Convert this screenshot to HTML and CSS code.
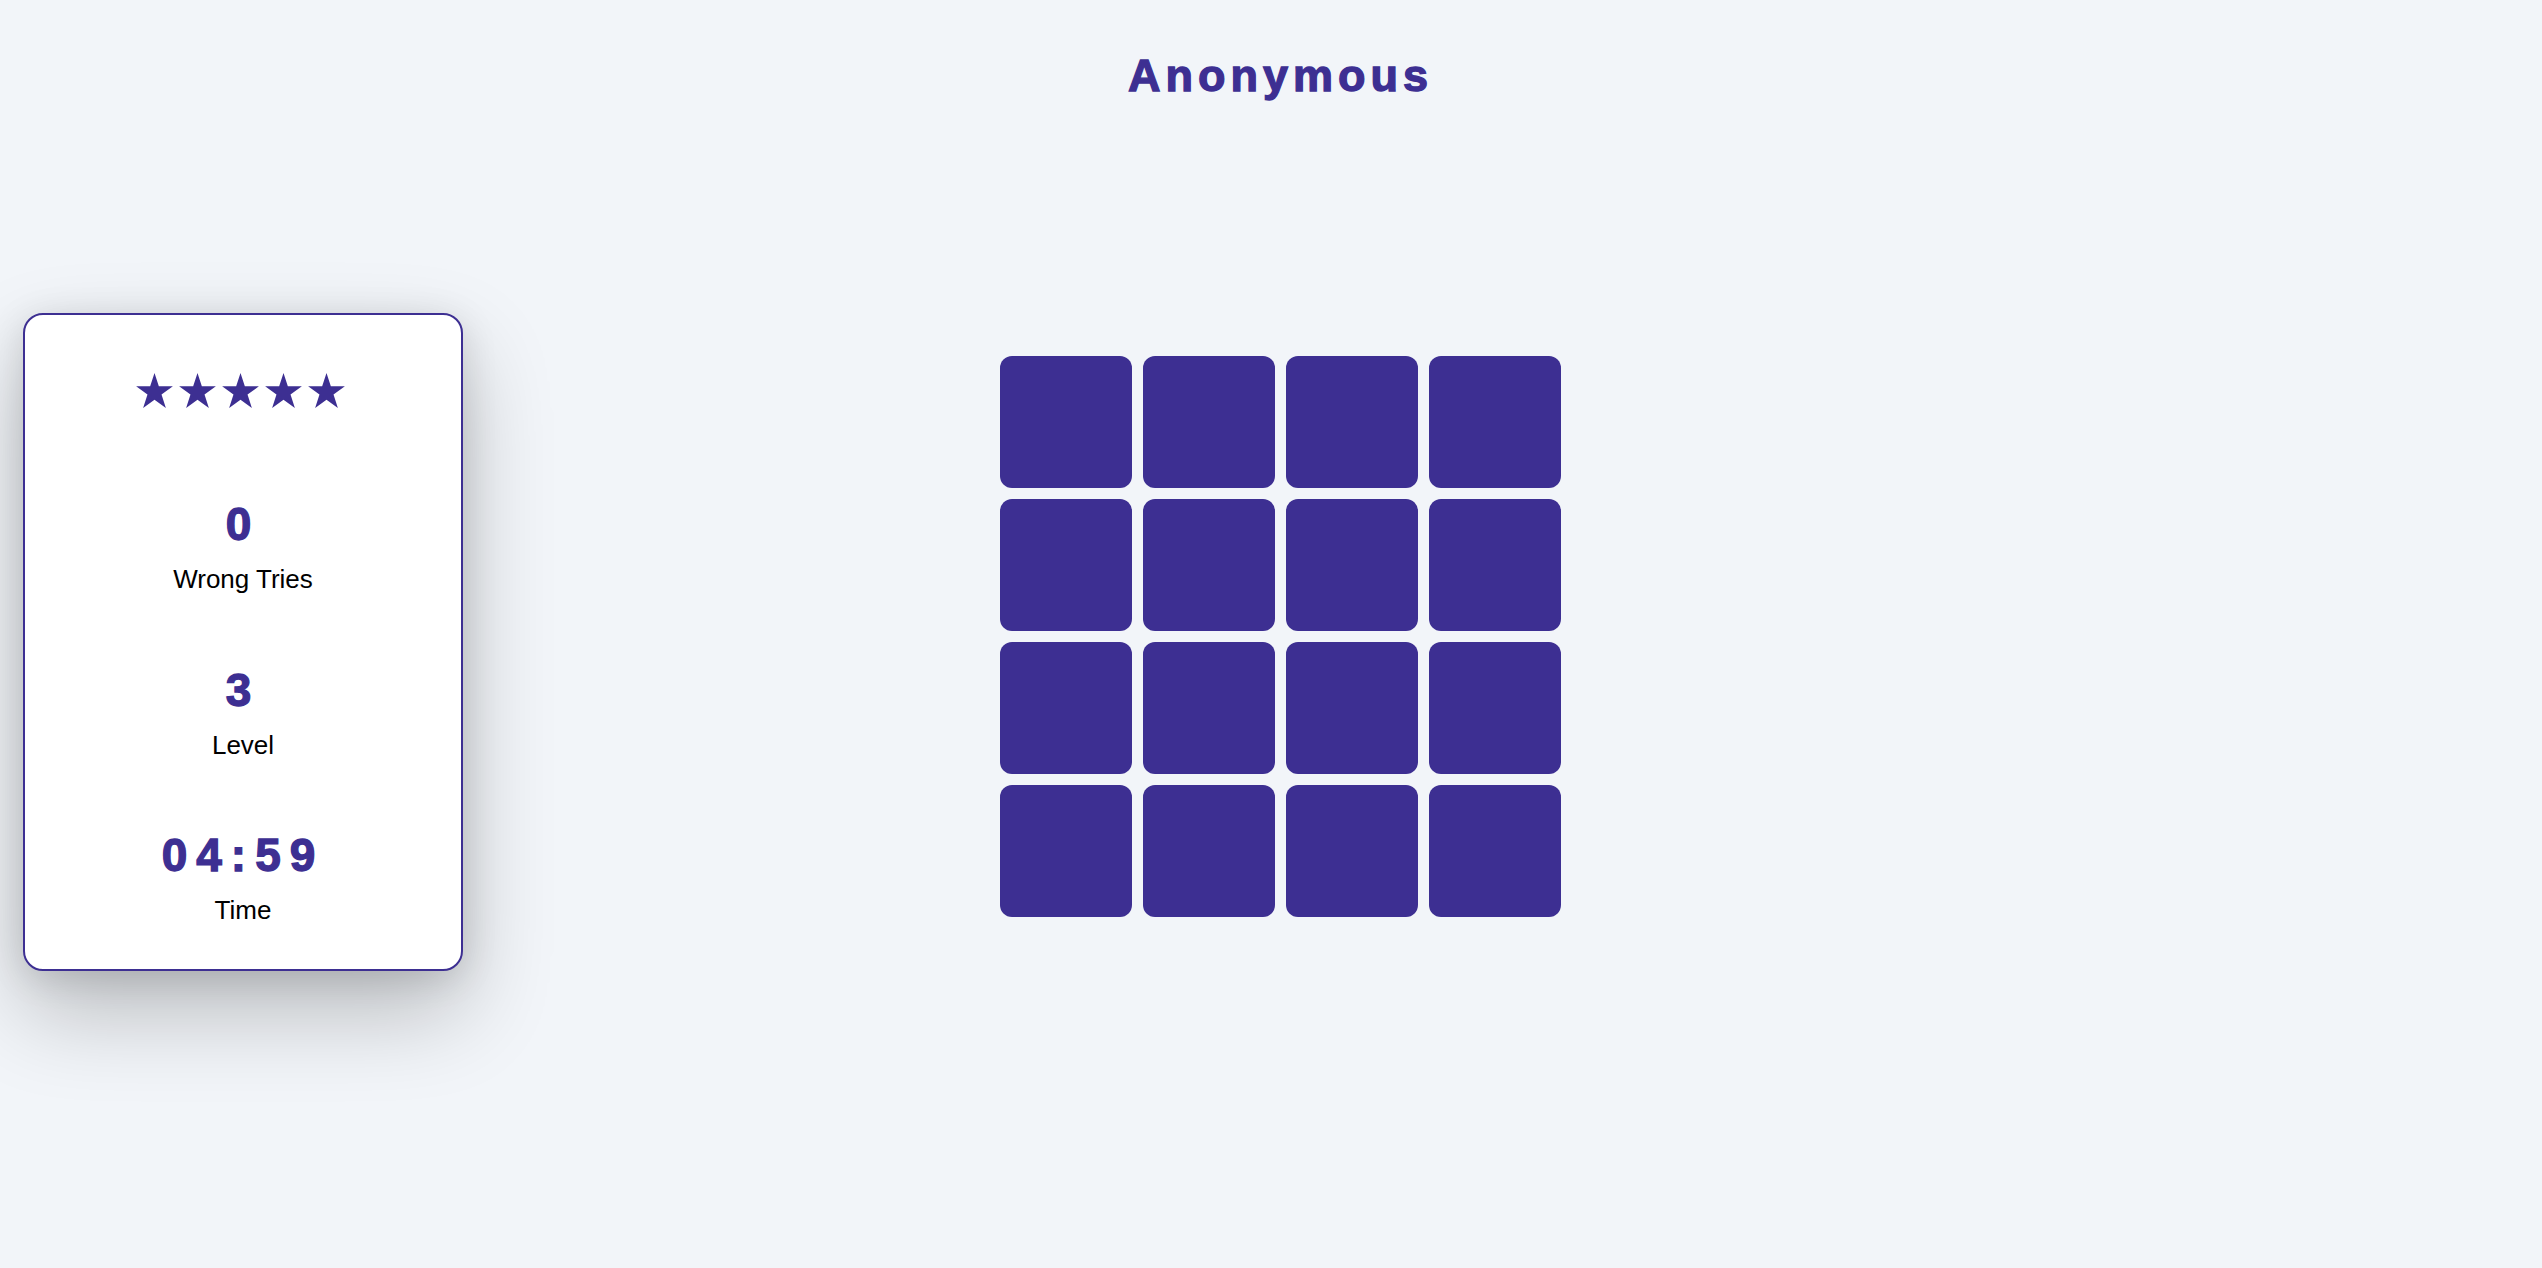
FILE: index.html
```html
<!DOCTYPE html>
<html lang="en">
<head>
<meta charset="utf-8">
<title>Anonymous</title>
<link rel="stylesheet" href="styles.css">
</head>
<body>
<div class="page">
  <h1 class="title">Anonymous</h1>
  <div class="layout">
    <aside class="stats">
      <div class="stars">
        <svg class="star" viewBox="-95.1 -100 190.2 181"><polygon points="0,-100 22.45,-30.9 95.1,-30.9 36.3,11.8 58.8,80.9 0,38.2 -58.8,80.9 -36.3,11.8 -95.1,-30.9 -22.45,-30.9"/></svg>
        <svg class="star" viewBox="-95.1 -100 190.2 181"><polygon points="0,-100 22.45,-30.9 95.1,-30.9 36.3,11.8 58.8,80.9 0,38.2 -58.8,80.9 -36.3,11.8 -95.1,-30.9 -22.45,-30.9"/></svg>
        <svg class="star" viewBox="-95.1 -100 190.2 181"><polygon points="0,-100 22.45,-30.9 95.1,-30.9 36.3,11.8 58.8,80.9 0,38.2 -58.8,80.9 -36.3,11.8 -95.1,-30.9 -22.45,-30.9"/></svg>
        <svg class="star" viewBox="-95.1 -100 190.2 181"><polygon points="0,-100 22.45,-30.9 95.1,-30.9 36.3,11.8 58.8,80.9 0,38.2 -58.8,80.9 -36.3,11.8 -95.1,-30.9 -22.45,-30.9"/></svg>
        <svg class="star" viewBox="-95.1 -100 190.2 181"><polygon points="0,-100 22.45,-30.9 95.1,-30.9 36.3,11.8 58.8,80.9 0,38.2 -58.8,80.9 -36.3,11.8 -95.1,-30.9 -22.45,-30.9"/></svg>
      </div>
      <div class="stat-list">
        <div class="stat">
          <div class="stat-value">0</div>
          <div class="stat-label">Wrong Tries</div>
        </div>
        <div class="stat">
          <div class="stat-value">3</div>
          <div class="stat-label">Level</div>
        </div>
        <div class="stat">
          <div class="stat-value">04:59</div>
          <div class="stat-label">Time</div>
        </div>
      </div>
    </aside>
    <main class="board">
      <div class="tile"></div><div class="tile"></div><div class="tile"></div><div class="tile"></div>
      <div class="tile"></div><div class="tile"></div><div class="tile"></div><div class="tile"></div>
      <div class="tile"></div><div class="tile"></div><div class="tile"></div><div class="tile"></div>
      <div class="tile"></div><div class="tile"></div><div class="tile"></div><div class="tile"></div>
    </main>
    <div class="spacer"></div>
  </div>
</div>
</body>
</html>
```

FILE: styles.css
```css
html, body {
  margin: 0;
  padding: 0;
  background: #f2f5f9;
}

body {
  font-family: "Liberation Sans", Arial, sans-serif;
  color: #000;
  min-height: 1268px;
}

.page {
  padding: 0 4px 0 23px;
}

.title {
  margin: 50px 0 0 0;
  text-align: center;
  font-size: 45px;
  line-height: 52px;
  font-weight: 700;
  letter-spacing: 5px;
  color: #3d2f92;
  -webkit-text-stroke: 1.3px #3d2f92;
}

.layout {
  display: grid;
  grid-template-columns: 1fr auto 1fr;
  align-items: start;
  margin-top: 211px;
}

.stats {
  justify-self: start;
  width: 440px;
  box-sizing: border-box;
  background: #fff;
  border: 2px solid #3d2f92;
  border-radius: 20px;
  padding: 58px 0 43px 0;
  box-shadow: 0 40px 90px rgba(0, 0, 0, 0.24), 0 6px 36px rgba(0, 0, 0, 0.12);
  display: flex;
  flex-direction: column;
  align-items: center;
}

.stars {
  display: flex;
  height: 34px;
  margin-bottom: 94px;
}

.star {
  width: 37px;
  height: 35px;
  margin-right: 6px;
  fill: #3d2f92;
}

.stat-list {
  display: flex;
  flex-direction: column;
  gap: 71.5px;
  align-items: center;
}

.stat {
  display: flex;
  flex-direction: column;
  align-items: center;
  gap: 17px;
}

.stat-value {
  font-size: 46px;
  line-height: 46px;
  font-weight: 700;
  letter-spacing: 9px;
  color: #3d2f92;
  -webkit-text-stroke: 1.3px #3d2f92;
}

.stat-label {
  font-size: 26px;
  line-height: 31px;
  color: #000;
}

.board {
  margin-top: 43px;
  display: grid;
  grid-template-columns: repeat(4, 132px);
  grid-auto-rows: 132px;
  gap: 11px;
}

.tile {
  background: #3d2f92;
  border-radius: 12px;
}
```
